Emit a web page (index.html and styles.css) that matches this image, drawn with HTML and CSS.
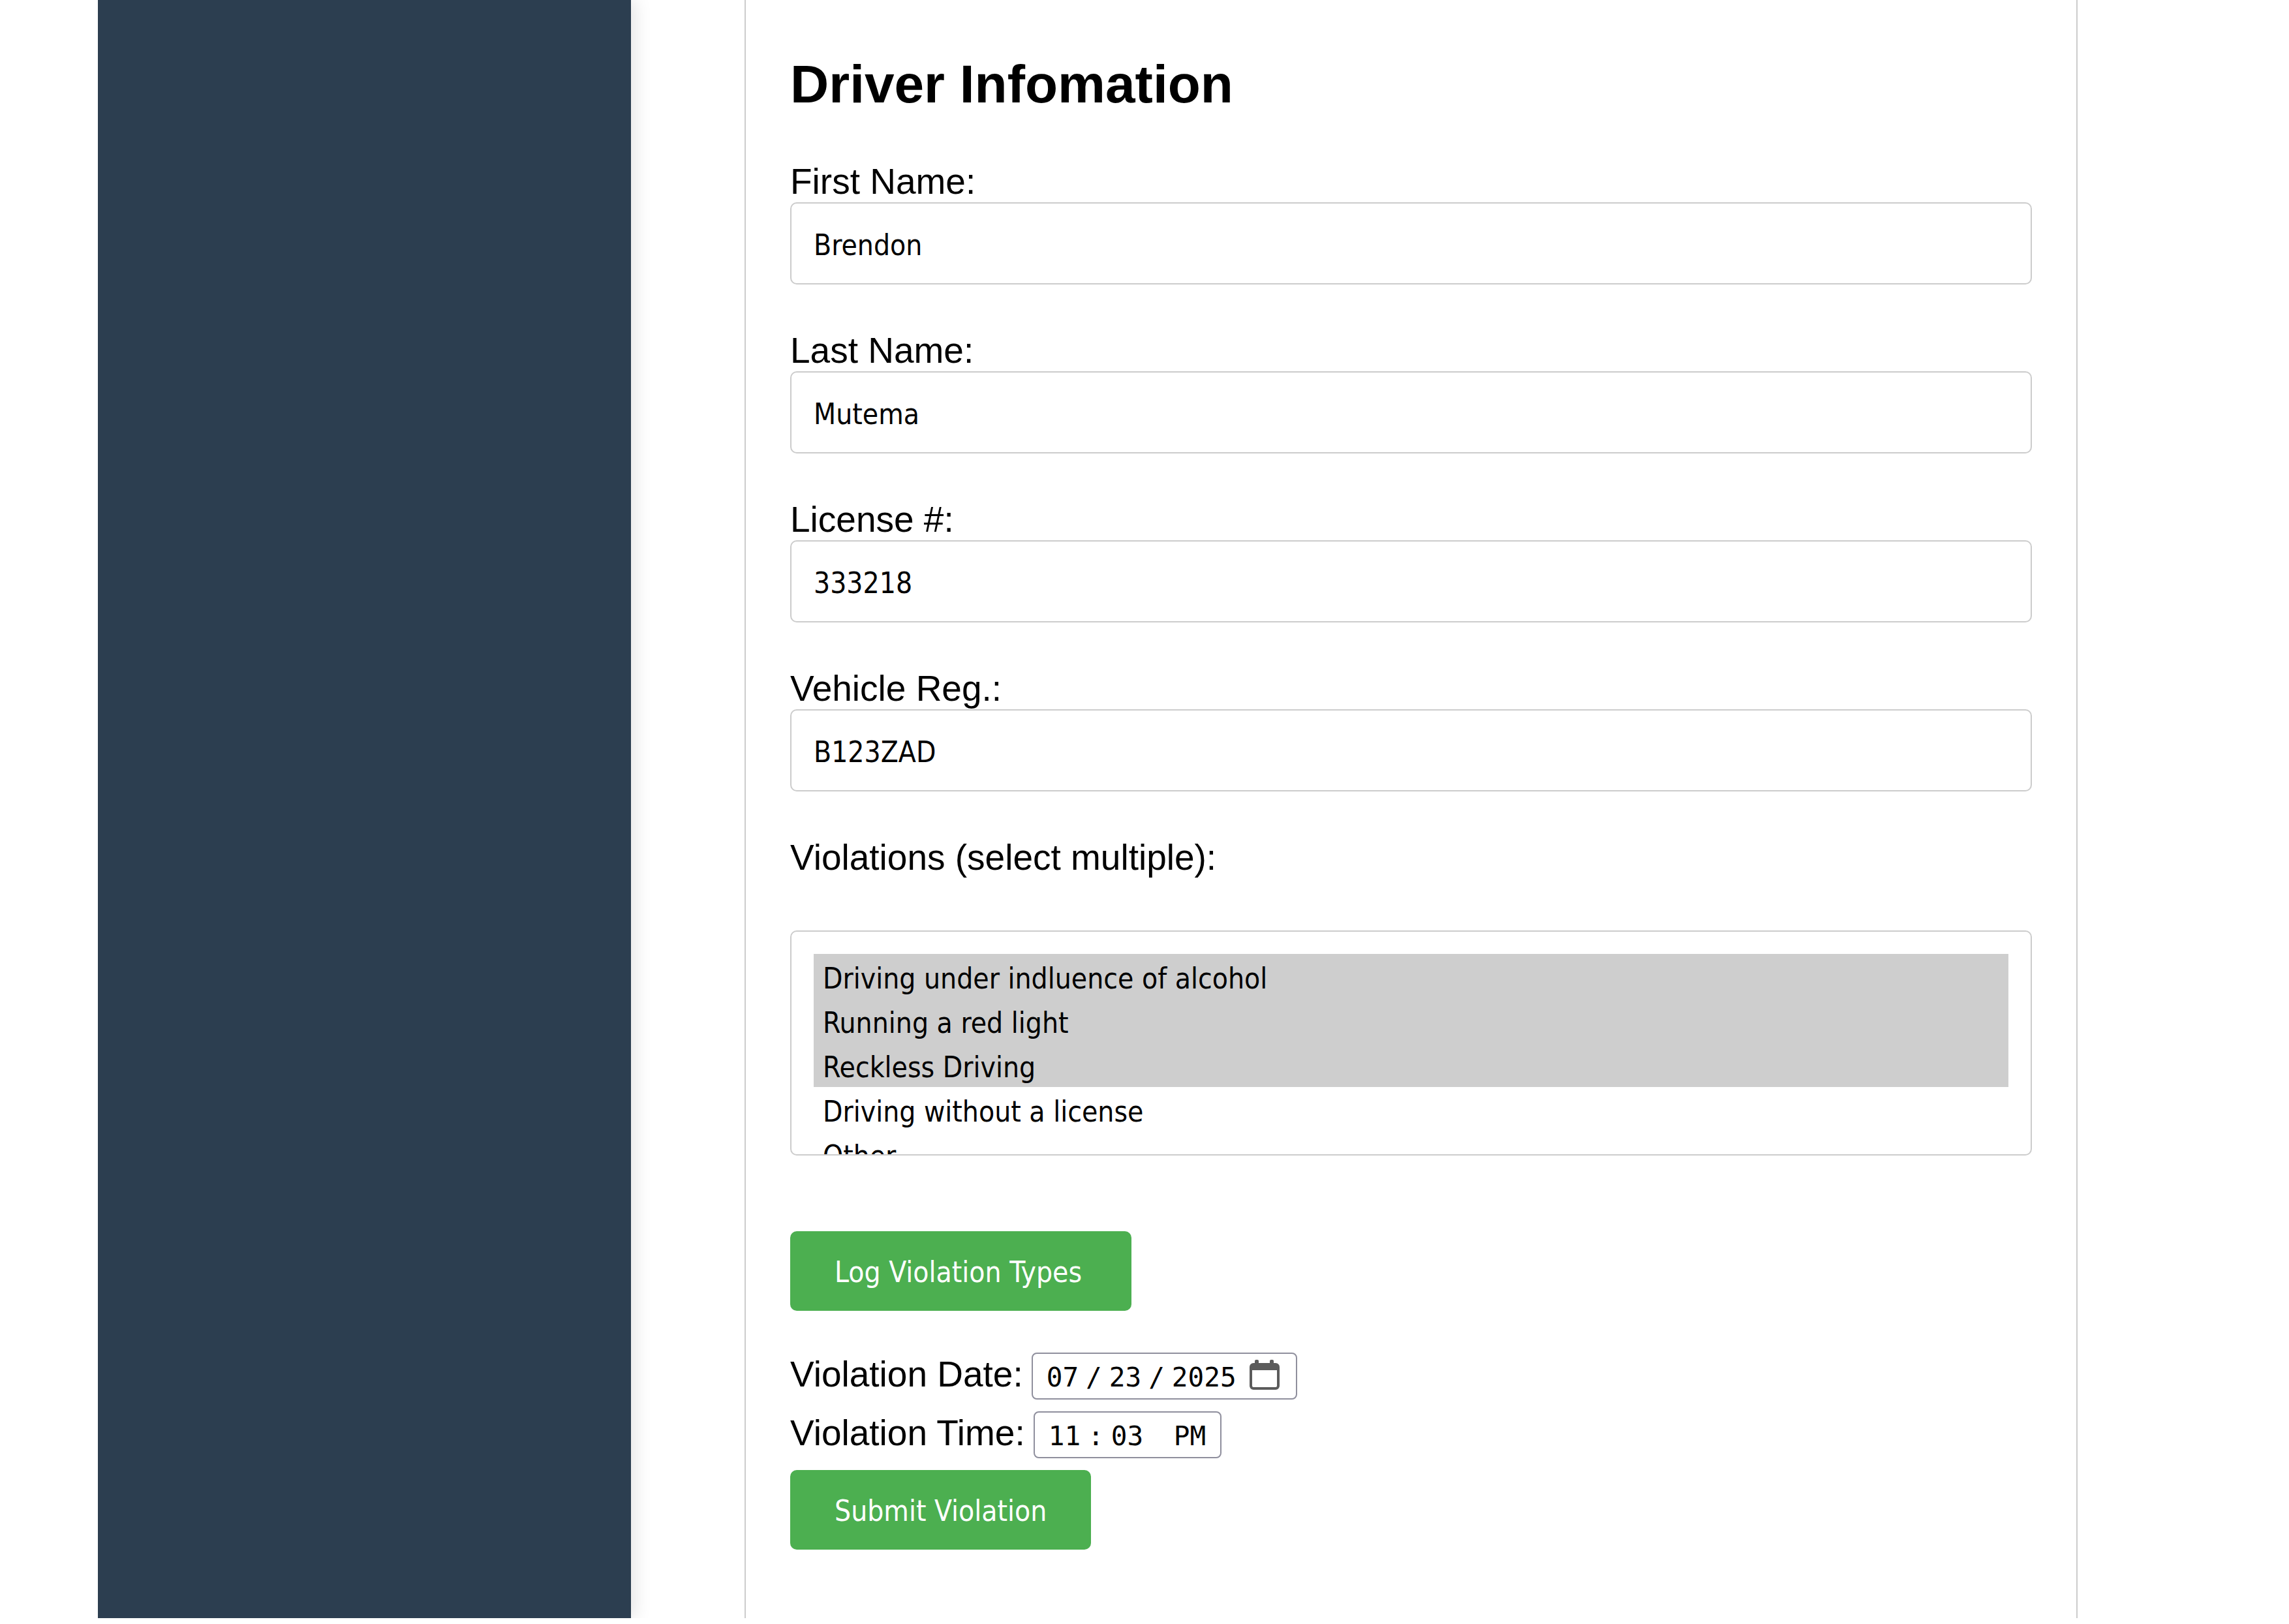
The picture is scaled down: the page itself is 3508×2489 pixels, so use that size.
FILE: index.html
```html
<!DOCTYPE html>
<html lang="en-US">
<head>
  <meta charset="utf-8">
  <title>Driver Infomation</title>
  <link rel="stylesheet" href="styles.css">
</head>
<body>
  <div class="page">
    <aside class="sidebar"></aside>
    <main class="main">
      <form class="card">
        <h2 class="title">Driver Infomation</h2>
        <div class="field">
          <label for="first-name">First Name:</label>
          <input class="text-input" id="first-name" type="text" value="Brendon">
        </div>
        <div class="field">
          <label for="last-name">Last Name:</label>
          <input class="text-input" id="last-name" type="text" value="Mutema">
        </div>
        <div class="field">
          <label for="license">License #:</label>
          <input class="text-input" id="license" type="text" value="333218">
        </div>
        <div class="field">
          <label for="vehicle">Vehicle Reg.:</label>
          <input class="text-input" id="vehicle" type="text" value="B123ZAD">
        </div>
        <div class="field field-list">
          <label for="violations">Violations (select multiple):</label>
          <select class="list" id="violations" multiple>
            <option selected>Driving under indluence of alcohol</option>
            <option selected>Running a red light</option>
            <option selected>Reckless Driving</option>
            <option>Driving without a license</option>
            <option>Other</option>
          </select>
        </div>
        <button class="button button-log" type="button">Log Violation Types</button>
        <div class="when">
          <div class="inline-field">
            <label for="date">Violation Date:</label>
            <span class="date-box">
              <input class="picker picker-date" id="date" type="date" value="2025-07-23">
              <svg class="calendar" viewBox="0 0 46 46" aria-hidden="true">
                <path fill="#5b5b5b" fill-rule="evenodd" d="M8 2a2 2 0 0 1 2-2h2a2 2 0 0 1 2 2v3h17V2a2 2 0 0 1 2-2h2a2 2 0 0 1 2 2v3h3a6 6 0 0 1 6 6v29a6 6 0 0 1-6 6H6a6 6 0 0 1-6-6V11a6 6 0 0 1 6-6h2zM4 16v24a2 2 0 0 0 2 2h34a2 2 0 0 0 2-2V16z"/>
              </svg>
            </span>
          </div>
          <div class="inline-field">
            <label for="time">Violation Time:</label>
            <input class="picker picker-time" id="time" type="time" value="23:03">
          </div>
        </div>
        <button class="button" type="submit">Submit Violation</button>
      </form>
    </main>
  </div>
</body>
</html>
```
FILE: styles.css
```css
* {
  box-sizing: border-box;
}

body {
  margin: 0;
  background: #fff;
  color: #000;
  font: 55px/63px "Liberation Sans", Arial, sans-serif;
}

.page {
  display: flex;
  margin: 0 150px;
  overflow: hidden;
}

.sidebar {
  flex: 0 0 817px;
  background: #2c3e50;
  box-shadow: 7px 0 24px rgba(0, 0, 0, 0.1);
}

.main {
  flex: 1;
  padding: 0 174px;
}

.card {
  display: flex;
  flex-direction: column;
  align-items: flex-start;
  padding: 82px 68px 105px;
  border: solid #ccc;
  border-width: 0 2px;
}

.title {
  margin: 0 0 71px;
  font-size: 82px;
  line-height: 94px;
}

.field {
  display: flex;
  flex-direction: column;
  align-self: stretch;
  margin-bottom: 70px;
}

.field-list {
  gap: 80px;
  margin-bottom: 116px;
}

.text-input,
.list {
  width: 100%;
  margin: 0;
  border: 2px solid #ccc;
  border-radius: 10px;
  background: #fff;
  color: #000;
  font: 44px/56px "DejaVu Sans Condensed", Tahoma, sans-serif;
}

.text-input {
  height: 126px;
  padding: 4px 34px 0;
}

.list {
  height: 345px;
  padding: 34px;
  overflow: hidden;
  scrollbar-width: none;
}

.list option {
  min-height: 68px;
  padding: 12px 14px 0;
  line-height: 56px;
}

.list option:checked {
  background: #cecece;
  color: #000;
}

.button {
  height: 122px;
  padding: 4px 68px 0;
  border: 0;
  border-radius: 10px;
  background: #4caf50;
  color: #fff;
  font: 44px/56px "DejaVu Sans Condensed", Tahoma, sans-serif;
  text-align: left;
}

.button-log {
  min-width: 523px;
}

.when {
  display: flex;
  flex-direction: column;
  gap: 18px;
  margin: 64px 0 18px;
}

.inline-field {
  display: flex;
  align-items: baseline;
  gap: 13px;
}

.date-box {
  position: relative;
  display: flex;
}

.picker {
  height: 72px;
  margin: 0;
  border: 2px solid #8f8f9d;
  border-radius: 8px;
  background: #fff;
  color: #000;
  font: 41px/48px "DejaVu Sans Mono", Consolas, monospace;
}

.picker-date {
  width: 407px;
  padding: 4px 25px 0 21px;
}

.picker-time {
  width: 288px;
  padding: 4px 0 0 21px;
}

.picker::-webkit-datetime-edit,
.picker::-webkit-datetime-edit-fields-wrapper,
.picker::-webkit-datetime-edit-month-field,
.picker::-webkit-datetime-edit-day-field,
.picker::-webkit-datetime-edit-year-field,
.picker::-webkit-datetime-edit-hour-field,
.picker::-webkit-datetime-edit-minute-field,
.picker::-webkit-datetime-edit-ampm-field {
  padding: 0;
}

.picker::-webkit-datetime-edit-text {
  padding: 0 11px;
}

.picker-date::-webkit-calendar-picker-indicator {
  width: 46px;
  height: 46px;
  margin: 0;
  padding: 0;
  opacity: 0;
}

.picker-time::-webkit-calendar-picker-indicator {
  display: none;
}

.calendar {
  position: absolute;
  top: 11px;
  right: 27px;
  width: 46px;
  height: 46px;
  pointer-events: none;
}
```
